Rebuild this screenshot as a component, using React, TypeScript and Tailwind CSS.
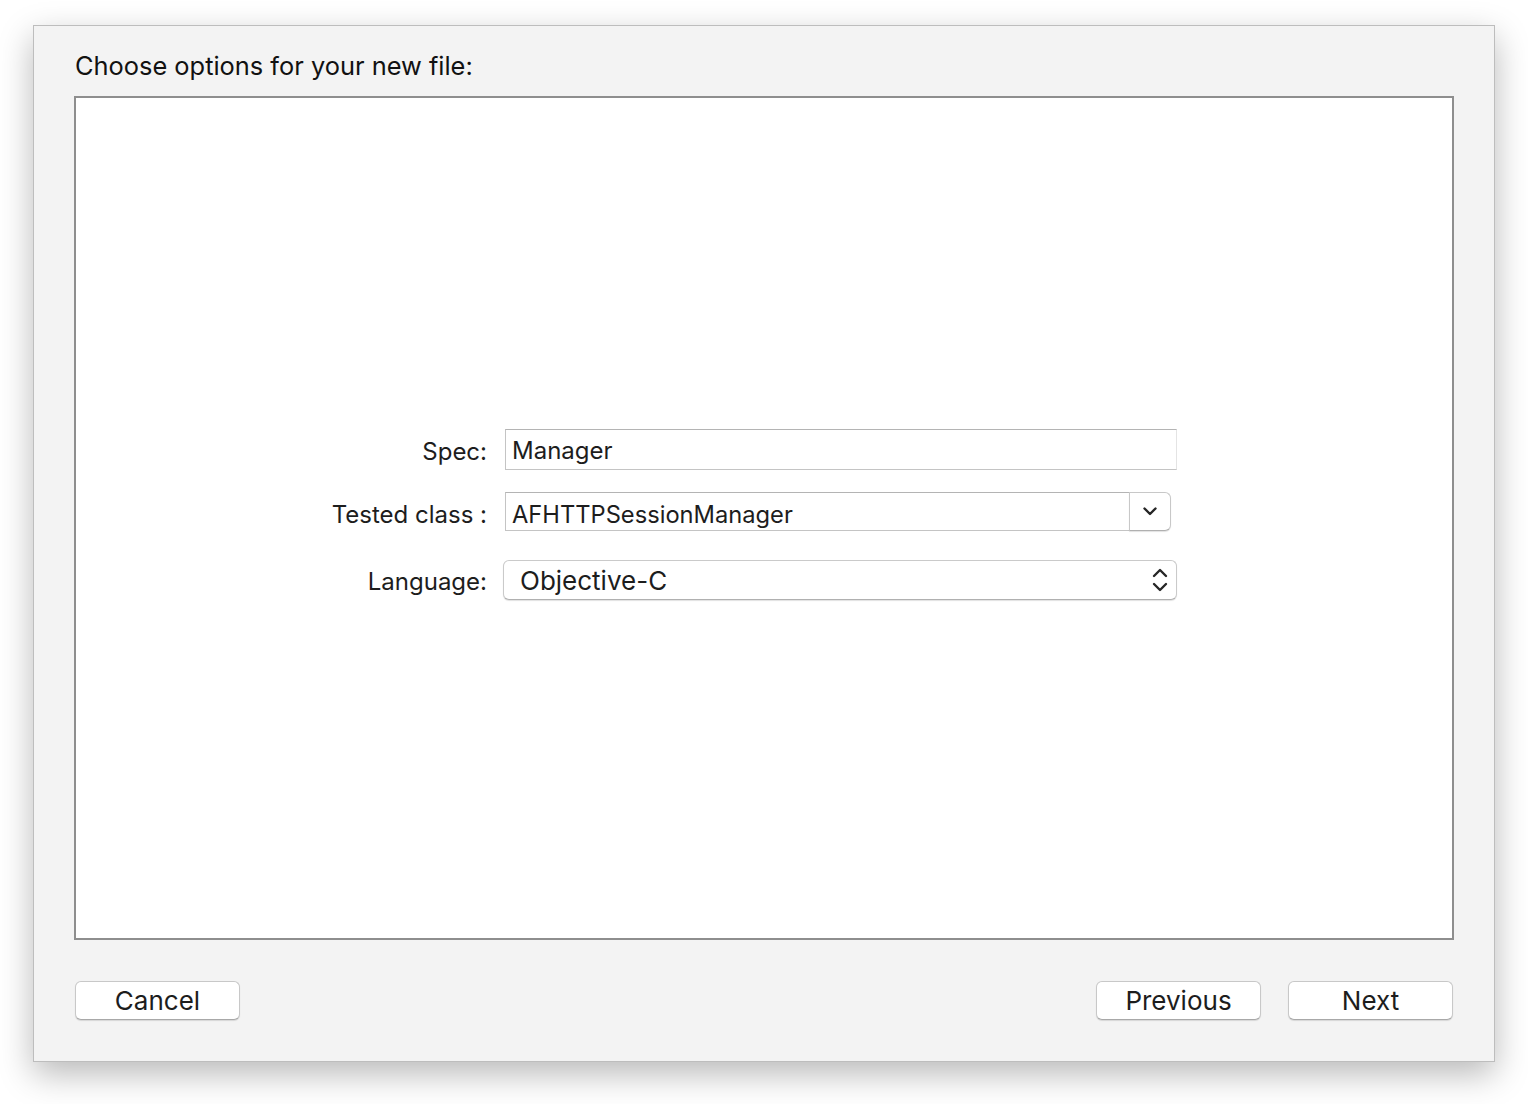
export default function App() {
  return (
    <div
      className="w-[1528px] h-[1104px] bg-white pt-[25px] pl-[33px]"
      style={{ fontFamily: "Inter, 'Liberation Sans', sans-serif" }}
    >
      {/* Dialog window */}
      <div className="w-[1462px] h-[1037px] bg-[#f3f3f3] border border-[#bdbdbd] shadow-[0_12px_32px_rgba(0,0,0,0.28)] flex flex-col px-[40px]">
        <h1 className="mt-[24px] h-[32px] leading-[32px] text-[25.4px] text-[#111] pl-[1px]">
          Choose options for your new file:
        </h1>

        {/* Options box */}
        <div className="mt-[14px] h-[844px] bg-white border-2 border-[#8e8e8e] pt-[331px]">
          <div className="flex flex-col">
            {/* Spec */}
            <div className="flex items-center h-[41px]">
              <label className="w-[411px] text-right text-[24px] text-[#1d1d1d] pt-[4px]">Spec:</label>
              <div className="ml-[18px] w-[672px] h-[41px] border border-[#c4c4c4] border-t-[#b4b4b4] border-r-[#e4e4e4] flex items-center pl-[6px] text-[24px] text-[#1d1d1d] pt-[3px]">
                Manager
              </div>
            </div>

            {/* Tested class */}
            <div className="flex items-center h-[39px] mt-[22px]">
              <label className="w-[411px] text-right text-[24px] text-[#1d1d1d] pt-[6px]">Tested class :</label>
              <div className="ml-[18px] flex h-[39px]">
                <div className="w-[626px] h-[39px] border border-[#c4c4c4] border-t-[#b4b4b4] border-r-0 flex items-center pl-[6px] text-[23.7px] text-[#1d1d1d] pt-[6px]">
                  AFHTTPSessionManager
                </div>
                <div className="w-[42px] h-[39px] -ml-[2px] bg-white border border-[#c8c8c8] border-b-[#b0b0b0] rounded-r-[6px] shadow-[0_1px_1px_rgba(0,0,0,0.12)] flex items-center justify-center">
                  <svg width="14" height="9" viewBox="0 0 14 9" fill="none">
                    <path d="M1.5 1.5 L7 7 L12.5 1.5" stroke="#262626" strokeWidth="2.4" strokeLinecap="round" strokeLinejoin="round" />
                  </svg>
                </div>
              </div>
            </div>

            {/* Language */}
            <div className="flex items-center h-[40px] mt-[29px]">
              <label className="w-[411px] text-right text-[24px] text-[#1d1d1d] pt-[4px]">Language:</label>
              <div className="ml-[16px] w-[674px] h-[40px] bg-white border border-[#cacaca] border-b-[#b0b0b0] rounded-[6px] shadow-[0_1px_1px_rgba(0,0,0,0.12)] flex items-center justify-between pl-[16px] pr-[7px]">
                <span className="text-[26px] text-[#1d1d1d]">Objective-C</span>
                <svg width="18" height="28" viewBox="0 0 18 28" fill="none">
                  <path d="M3 10 L9 4 L15 10" stroke="#262626" strokeWidth="2.4" strokeLinecap="round" strokeLinejoin="round" />
                  <path d="M3 18 L9 24 L15 18" stroke="#262626" strokeWidth="2.4" strokeLinecap="round" strokeLinejoin="round" />
                </svg>
              </div>
            </div>
          </div>
        </div>

        {/* Buttons */}
        <div className="mt-[41px] flex items-center justify-between pl-[1px] pr-[1px]">
          <button className="w-[165px] h-[39px] bg-white border border-[#c8c8c8] border-b-[#a8a8a8] rounded-[6px] shadow-[0_1px_1px_rgba(0,0,0,0.12)] text-[26px] text-[#1d1d1d] leading-none">
            Cancel
          </button>
          <div className="flex gap-[27px]">
            <button className="w-[165px] h-[39px] bg-white border border-[#c8c8c8] border-b-[#a8a8a8] rounded-[6px] shadow-[0_1px_1px_rgba(0,0,0,0.12)] text-[26px] text-[#1d1d1d] leading-none">
              Previous
            </button>
            <button className="w-[165px] h-[39px] bg-white border border-[#c8c8c8] border-b-[#a8a8a8] rounded-[6px] shadow-[0_1px_1px_rgba(0,0,0,0.12)] text-[26px] text-[#1d1d1d] leading-none">
              Next
            </button>
          </div>
        </div>
      </div>
    </div>
  );
}
